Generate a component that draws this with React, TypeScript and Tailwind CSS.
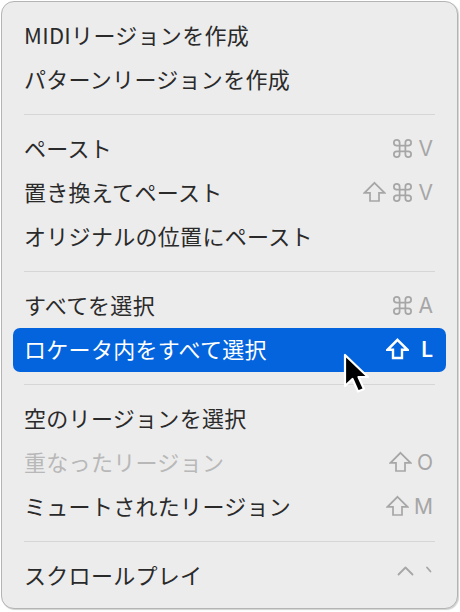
import React from "react";

type Item =
  | { type: "sep" }
  | {
      type: "item";
      label: string;
      shortcut?: (active: boolean) => React.ReactNode;
      disabled?: boolean;
      active?: boolean;
    };

const Cmd = ({ active }: { active: boolean }) => (
  <svg width="23" height="23" viewBox="0 0 24 24" fill="none" stroke="currentColor" strokeWidth={active ? 2.3 : 1.8} strokeLinecap="round" strokeLinejoin="round">
    <path d="M15 6v12a3 3 0 1 0 3-3H6a3 3 0 1 0 3 3V6a3 3 0 1 0-3 3h12a3 3 0 1 0-3-3" />
  </svg>
);
const Shift = ({ active }: { active: boolean }) => (
  <svg width="23" height="22" viewBox="0 0 23 22" fill="none" stroke="currentColor" strokeWidth={active ? 2.4 : 1.7} strokeLinejoin="miter">
    <path d="M11.5 1.8 L21.5 11.8 H16 V20 H7 V11.8 H1.5 Z" />
  </svg>
);
const Key = ({ k, active }: { k: string; active: boolean }) => (
  <span className={"font-['Inter','Noto_Sans',sans-serif] text-[21px] leading-none " + (active ? "font-semibold" : "font-normal")}>{k}</span>
);

const items: Item[] = [
  { type: "item", label: "MIDIリージョンを作成" },
  { type: "item", label: "パターンリージョンを作成" },
  { type: "sep" },
  {
    type: "item",
    label: "ペースト",
    shortcut: (a) => (
      <>
        <Cmd active={a} />
        <Key k="V" active={a} />
      </>
    ),
  },
  {
    type: "item",
    label: "置き換えてペースト",
    shortcut: (a) => (
      <>
        <Shift active={a} />
        <Cmd active={a} />
        <Key k="V" active={a} />
      </>
    ),
  },
  { type: "item", label: "オリジナルの位置にペースト" },
  { type: "sep" },
  {
    type: "item",
    label: "すべてを選択",
    shortcut: (a) => (
      <>
        <Cmd active={a} />
        <Key k="A" active={a} />
      </>
    ),
  },
  {
    type: "item",
    label: "ロケータ内をすべて選択",
    active: true,
    shortcut: (a) => (
      <>
        <Shift active={a} />
        <span className="w-[2px]" />
        <Key k="L" active={a} />
      </>
    ),
  },
  { type: "sep" },
  { type: "item", label: "空のリージョンを選択" },
  {
    type: "item",
    label: "重なったリージョン",
    disabled: true,
    shortcut: (a) => (
      <>
        <Shift active={a} />
        <Key k="O" active={a} />
      </>
    ),
  },
  {
    type: "item",
    label: "ミュートされたリージョン",
    shortcut: (a) => (
      <>
        <Shift active={a} />
        <Key k="M" active={a} />
      </>
    ),
  },
  { type: "sep" },
  {
    type: "item",
    label: "スクロールプレイ",
    shortcut: () => (
      <>
        <svg width="17" height="10" viewBox="0 0 17 10" fill="none" stroke="currentColor" strokeWidth="1.8" strokeLinecap="round" strokeLinejoin="round" className="-mt-[8px]">
          <path d="M1.5 8.5 L8.5 1.5 L15.5 8.5" />
        </svg>
        <svg width="8" height="8" viewBox="0 0 8 8" fill="none" stroke="currentColor" strokeWidth="1.8" strokeLinecap="round" className="-mt-[10px] ml-[6px]">
          <path d="M2 1.5 L5.5 5.5" />
        </svg>
      </>
    ),
  },
];

function Cursor() {
  return (
    <svg
      className="absolute left-[343px] top-[353px]"
      width="28"
      height="42"
      viewBox="0 0 28 42"
    >
      <path
        d="M2 2 L2 33 L9.5 26 L15 38.5 L21 36 L15.5 24 L25 24 Z"
        fill="#000"
        stroke="#fff"
        strokeWidth="2.2"
        strokeLinejoin="round"
      />
    </svg>
  );
}

export default function App() {
  return (
    <div className="w-[460px] h-[612px] bg-white relative font-['Noto_Sans_CJK_JP','Noto_Sans',sans-serif]">
      <div className="absolute left-[1px] top-[1px] w-[457px] rounded-[13px] border border-[#b4b4b4] bg-[#ececec] shadow-[1px_1px_1px_rgba(0,0,0,0.18)] px-[11px] pt-[12px] pb-[10px]">
        {items.map((it, i) =>
          it.type === "sep" ? (
            <div key={i} className="h-[25px] flex items-center px-[11px]">
              <div className="h-[1.5px] w-full bg-[#d6d6d6]" />
            </div>
          ) : (
            <div
              key={i}
              className={
                "h-[44px] flex items-center justify-between pl-[11px] pr-[13px] rounded-[7px] " +
                (it.active ? "bg-[#0464de] text-white" : "")
              }
            >
              <span
                className={
                  "text-[22px] tracking-[0.3px] leading-none -mt-[5px] " +
                  (it.active
                    ? "text-white"
                    : it.disabled
                    ? "text-[#b8b8b8]"
                    : "text-[#2a2a2a]")
                }
              >
                {it.label}
              </span>
              {it.shortcut && (
                <span
                  className={
                    "flex items-center gap-[5px] leading-none -mt-[2px] " +
                    (it.active ? "text-white" : "text-[#a6a6a6]")
                  }
                >
                  {it.shortcut(!!it.active)}
                </span>
              )}
            </div>
          )
        )}
      </div>
      <Cursor />
    </div>
  );
}
